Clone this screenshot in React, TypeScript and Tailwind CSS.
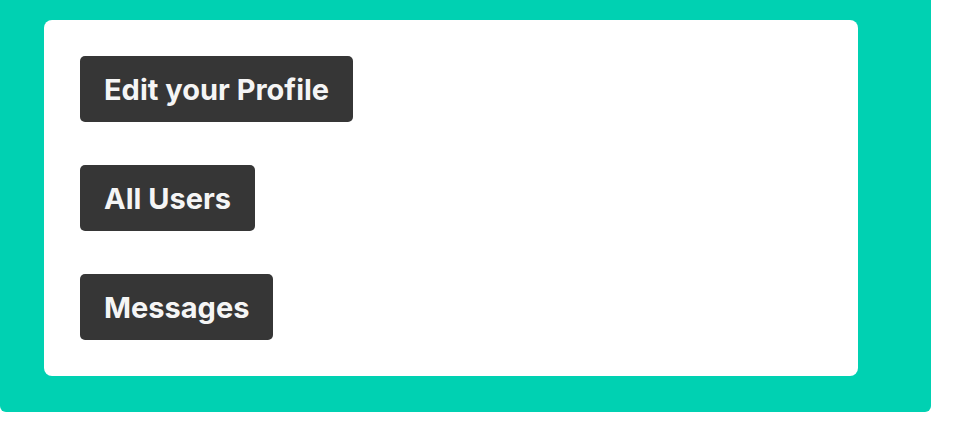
export default function App() {
  const links = ['Edit your Profile', 'All Users', 'Messages'];

  return (
    <div className="w-[956px] h-[442px] bg-white font-['Inter',sans-serif]">
      <div className="w-[931px] h-[412px] bg-[#00d1b2] rounded-b-md pt-5 pl-11">
        <div className="w-[814px] h-[356px] bg-white rounded-lg pt-9 pl-9 flex flex-col items-start gap-[43px]">
          {links.map((label) => (
            <button
              key={label}
              className="h-[66px] px-6 bg-[#363636] text-[#f5f5f5] text-[29px] font-bold rounded-[5px] leading-none"
            >
              {label}
            </button>
          ))}
        </div>
      </div>
    </div>
  );
}
